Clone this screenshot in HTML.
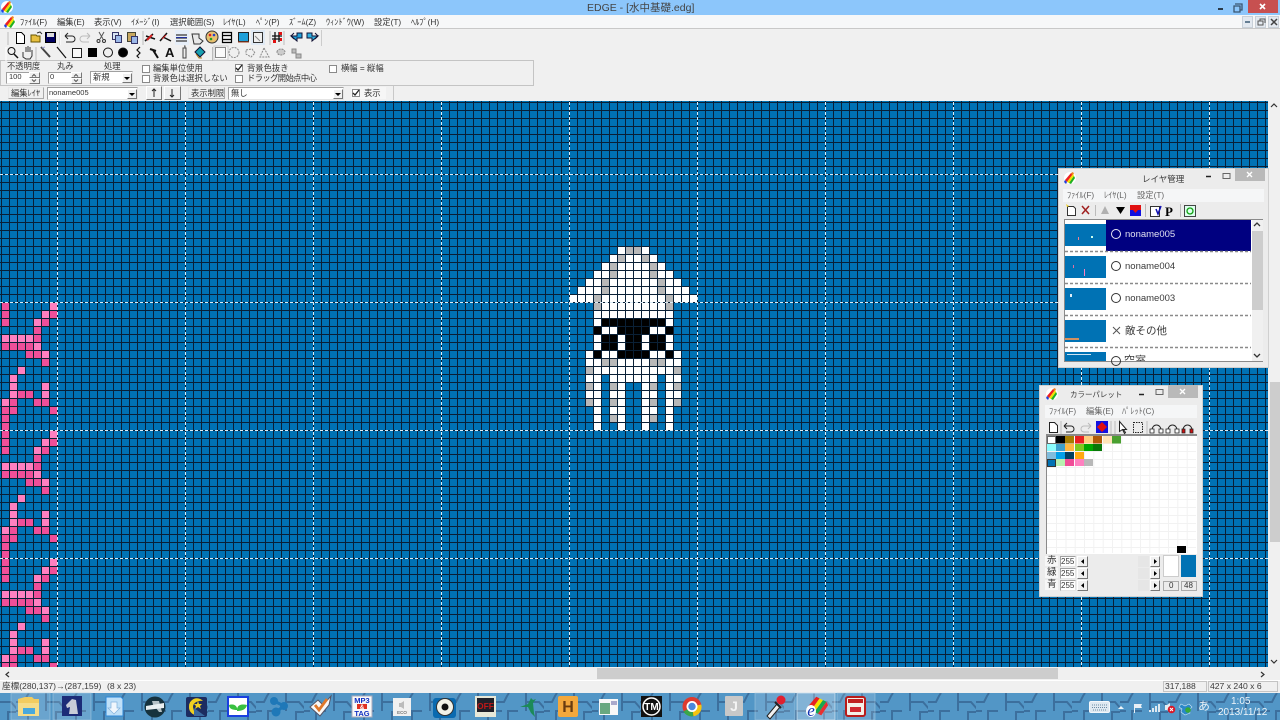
<!DOCTYPE html>
<html lang="ja"><head><meta charset="utf-8"><title>EDGE</title>
<style>
html,body{margin:0;padding:0;width:1280px;height:720px;overflow:hidden;background:#f0f0f0}
body{position:relative}
svg{position:absolute;left:0;top:0}
.b{position:absolute;box-sizing:border-box}
.t{position:absolute;white-space:nowrap;font:10px/12px "Liberation Sans","Noto Sans CJK JP",sans-serif;color:#3a3a3a;filter:blur(.2px)}
.m{font-size:8.3px;color:#333}
.in{position:absolute;box-sizing:border-box;background:#fff;border:1px solid #a0a0a0;border-bottom-color:#e4e4e4;border-right-color:#e4e4e4}
.btn{position:absolute;box-sizing:border-box;background:#f0f0f0;border:1px solid #fff;border-right-color:#777;border-bottom-color:#777}
.cb{position:absolute;box-sizing:border-box;width:8px;height:8px;background:#fff;border:1px solid #8a8a8a}
</style></head><body>

<div class="b" style="left:0;top:0;width:1280px;height:15px;background:#8cc6fb"></div>
<div class="b" style="left:0;top:15px;width:1280px;height:14px;background:#f6f7f8;border-bottom:1px solid #c8c8c8"></div>
<div class="b" style="left:1248px;top:0;width:30px;height:13px;background:#c75050"></div>
<div class="b" style="left:1242px;top:16px;width:11px;height:12px;background:#e3e9f0;border:1px solid #c8d0d8"></div>
<div class="b" style="left:1255px;top:16px;width:11px;height:12px;background:#e3e9f0;border:1px solid #c8d0d8"></div>
<div class="b" style="left:1268px;top:16px;width:11px;height:12px;background:#e3e9f0;border:1px solid #c8d0d8"></div>
<div class="b" style="left:0;top:60px;width:534px;height:26px;border:1px solid #c4c4c4"></div>

<svg width="1280" height="720" viewBox="0 0 1280 720" shape-rendering="crispEdges" style="clip-path:inset(101px 12px 53px 0)">
<defs>
<pattern id="g" width="8" height="8" patternUnits="userSpaceOnUse" x="1" y="102"><path d="M0 0h8v1H1v7H0z" fill="#0a2036"/></pattern>
<g id="pk">
<path fill="#ef4f99" d="M0 0h1v1H0zM0 1h1v1H0zM6 1h1v1H6zM0 2h1v1H0zM5 2h1v1H5zM4 3h1v1H4zM4 4h1v1H4zM0 5h4v1H0zM3 6h2v1H3zM5 7h1v1H5zM2 11h2v1H2zM1 12h1v1H1zM4 12h2v1H4zM0 13h2v1H0zM6 13h1v1H6zM0 14h1v1H0zM0 15h1v1H0z"/>
<path fill="#ff80c0" d="M6 0h1v1H6zM5 1h1v1H5zM4 2h1v1H4zM0 4h4v1H0zM4 5h1v1H4zM5 6h1v1H5zM2 8h1v1H2zM1 9h1v1H1zM1 10h1v1H1zM5 10h1v1H5zM1 11h1v1H1zM5 11h1v1H5zM0 12h1v1H0z"/>
</g>
</defs>
<rect x="0" y="100" width="1280" height="2" fill="#3a3a3a"/>
<rect x="0" y="101" width="1268" height="566" fill="#0072b4"/>
<use href="#pk" transform="translate(1 302) scale(8)"/>
<use href="#pk" transform="translate(1 430) scale(8)"/>
<use href="#pk" transform="translate(1 558) scale(8)"/>
<g transform="translate(561 246) scale(8)">
<path fill="#fff" d="M7 0h4v1H7zM6 1h6v1H6zM5 2h8v1H5zM4 3h10v1H4zM3 4h12v1H3zM2 5h14v1H2zM1 6h16v1H1zM4 7h10v6H4zM3 13h12v3H3zM3 16h2v4H3zM6 16h6v1H6zM13 16h2v4h-2zM6 17h2v4H6zM10 17h2v4h-2zM4 20h1v3H4zM13 20h1v3h-1zM7 21h1v2H7zM10 21h1v2h-1z"/>
<path fill="#b8b8b8" d="M8 0h2v1H8zM7 1h1v1H7zM10 1h1v1h-1zM6 2h1v2H6zM11 2h1v2h-1zM5 4h1v2H5zM12 4h1v2h-1zM4 6h1v2H4zM13 6h1v2h-1zM5 14h2v1H5zM11 14h2v1h-2zM3 15h1v1H3zM14 15h1v1h-1zM3 17h1v1H3zM14 17h1v1h-1zM6 17h1v1H6zM11 17h1v1h-1zM3 19h1v1H3zM14 19h1v1h-1zM6 19h1v1H6zM11 19h1v1h-1zM6 21h1v1H6zM11 21h1v1h-1z"/>
<path fill="#000" d="M5 9h8v1H5zM4 10h1v1H4zM7 10h4v1H7zM13 10h1v1h-1zM5 11h2v2H5zM8 11h2v2H8zM11 11h2v2h-2zM4 13h1v1H4zM7 13h4v1H7zM13 13h1v1h-1z"/>
</g>
<rect x="0" y="101" width="1268" height="566" fill="url(#g)"/>
<path stroke="#dcecf6" stroke-width="1" stroke-dasharray="3 2" fill="none" d="M0 174.500H1268M0 302.500H1268M0 430.500H1268M0 558.500H1268M57.500 102V667M185.500 102V667M313.500 102V667M441.500 102V667M569.500 102V667M697.500 102V667M825.500 102V667M953.500 102V667M1081.500 102V667M1209.500 102V667"/>
</svg>

<!-- scrollbars -->
<div class="b" style="left:1268px;top:102px;width:12px;height:565px;background:#f0f0f0"></div>
<div class="b" style="left:1270px;top:382px;width:10px;height:160px;background:#cdcdcd"></div>
<div class="b" style="left:0;top:667px;width:1280px;height:13px;background:#f0f0f0"></div>
<div class="b" style="left:597px;top:668px;width:461px;height:11px;background:#cdcdcd"></div>
<div class="b" style="left:0;top:680px;width:1280px;height:13px;background:#f0f0f0;border-top:1px solid #fff"></div>
<div class="b" style="left:1163px;top:681px;width:44px;height:11px;border:1px solid #c4c4c4"></div>
<div class="b" style="left:1208px;top:681px;width:70px;height:11px;border:1px solid #c4c4c4"></div>

<!-- inputs toolbar -->
<div class="in" style="left:6px;top:72px;width:34px;height:12px"></div>
<div class="btn" style="left:29px;top:72px;width:11px;height:6px"></div><div class="btn" style="left:29px;top:78px;width:11px;height:6px"></div>
<div class="in" style="left:48px;top:72px;width:34px;height:12px"></div>
<div class="btn" style="left:71px;top:72px;width:11px;height:6px"></div><div class="btn" style="left:71px;top:78px;width:11px;height:6px"></div>
<div class="in" style="left:90px;top:71px;width:43px;height:13px"></div>
<div class="btn" style="left:122px;top:73px;width:10px;height:10px"></div>
<div class="cb" style="left:142px;top:65px"></div><div class="cb" style="left:142px;top:75px"></div>
<div class="cb" style="left:235px;top:64px"></div><div class="cb" style="left:235px;top:75px"></div>
<div class="cb" style="left:329px;top:65px"></div>
<div class="btn" style="left:8px;top:87px;width:36px;height:12px;border-color:#e8e8e8 #aaa #aaa #e8e8e8"></div>
<div class="in" style="left:47px;top:87px;width:91px;height:13px"></div>
<div class="btn" style="left:127px;top:89px;width:10px;height:10px"></div>
<div class="btn" style="left:146px;top:86px;width:16px;height:14px"></div>
<div class="btn" style="left:164px;top:86px;width:17px;height:14px"></div>
<div class="btn" style="left:188px;top:87px;width:37px;height:12px;border-color:#e8e8e8 #aaa #aaa #e8e8e8"></div>
<div class="in" style="left:228px;top:87px;width:116px;height:13px"></div>
<div class="btn" style="left:333px;top:89px;width:10px;height:10px"></div>
<div class="b" style="left:351px;top:87px;width:35px;height:12px;background:#f6f6f6"></div>
<div class="cb" style="left:352px;top:89px"></div>
<div class="b" style="left:393px;top:86px;width:1px;height:14px;background:#c8c8c8"></div>
<div class="b" style="left:0;top:30px;width:322px;height:16px;border-right:1px solid #ccc"></div>

<!-- layer window -->
<div class="b" style="left:1058px;top:168px;width:211px;height:200px;background:#ececec;border:1px solid #d0d0d0"></div>
<div class="b" style="left:1235px;top:168px;width:30px;height:13px;background:#b9b9b9"></div>
<div class="b" style="left:1063px;top:189px;width:201px;height:13px;background:#f5f6f7"></div>
<div class="b" style="left:1064px;top:219px;width:199px;height:143px;background:#fff;border:1px solid #8a8a8a;border-width:1px 0 1px 1px"></div>
<div class="b" style="left:1252px;top:220px;width:11px;height:141px;background:#f0f0f0"></div>
<div class="b" style="left:1252px;top:231px;width:11px;height:79px;background:#cdcdcd"></div>
<div class="b" style="left:1106px;top:220px;width:145px;height:31px;background:#000080"></div>
<div class="b" style="left:1065px;top:224px;width:41px;height:22px;background:#0072b4"></div>
<div class="b" style="left:1065px;top:256px;width:41px;height:22px;background:#0072b4"></div>
<div class="b" style="left:1065px;top:288px;width:41px;height:22px;background:#0072b4"></div>
<div class="b" style="left:1065px;top:320px;width:41px;height:22px;background:#0072b4"></div>
<div class="b" style="left:1065px;top:352px;width:41px;height:9px;background:#0072b4"></div>

<!-- palette window -->
<div class="b" style="left:1039px;top:385px;width:164px;height:212px;background:#ececec;border:1px solid #d0d0d0"></div>
<div class="b" style="left:1168px;top:385px;width:30px;height:13px;background:#b9b9b9"></div>
<div class="b" style="left:1045px;top:405px;width:152px;height:13px;background:#f5f6f7"></div>
<div class="b" style="left:1046px;top:434px;width:151px;height:120px;background:#fff;border:1px solid #8a8a8a;border-width:2px 0 0 1px"></div>
<div class="b" style="left:1163px;top:555px;width:16px;height:22px;background:#fff;border:1px solid #ccc"></div>
<div class="b" style="left:1181px;top:555px;width:15px;height:22px;background:#0072b4"></div>
<div class="b" style="left:1163px;top:581px;width:16px;height:10px;border:1px solid #aaa"></div>
<div class="b" style="left:1181px;top:581px;width:16px;height:10px;border:1px solid #aaa"></div>
<div class="b" style="left:1045px;top:556px;width:13px;height:10px;background:#f7f7f7"></div>
<div class="b" style="left:1045px;top:568px;width:13px;height:10px;background:#f7f7f7"></div>
<div class="b" style="left:1045px;top:580px;width:13px;height:10px;background:#f7f7f7"></div>
<div class="in" style="left:1060px;top:556px;width:16px;height:11px"></div>
<div class="in" style="left:1060px;top:568px;width:16px;height:11px"></div>
<div class="in" style="left:1060px;top:580px;width:16px;height:11px"></div>
<div class="btn" style="left:1077px;top:556px;width:11px;height:11px"></div>
<div class="btn" style="left:1077px;top:568px;width:11px;height:11px"></div>
<div class="btn" style="left:1077px;top:580px;width:11px;height:11px"></div>
<div class="b" style="left:1138px;top:556px;width:11px;height:11px;background:#e6e6e6"></div>
<div class="b" style="left:1138px;top:568px;width:11px;height:11px;background:#e6e6e6"></div>
<div class="b" style="left:1138px;top:580px;width:11px;height:11px;background:#e6e6e6"></div>
<div class="btn" style="left:1150px;top:556px;width:10px;height:11px"></div>
<div class="btn" style="left:1150px;top:568px;width:10px;height:11px"></div>
<div class="btn" style="left:1150px;top:580px;width:10px;height:11px"></div>

<!-- taskbar bg -->
<div class="b" style="left:0;top:693px;width:1280px;height:27px;background:#5296c6"></div>

<!-- overlay icons -->
<svg width="1280" height="720" viewBox="0 0 1280 720">
<defs>
<pattern id="mz" width="48" height="27" patternUnits="userSpaceOnUse" x="880" y="693">
<path d="M0 9h8l3-6 2-3M30 0v9h13l7 8M30 9v9M12 27V18h10" fill="none" stroke="#3c6f9d" stroke-width="2"/>
<path d="M0 18h6M40 27V19h8" fill="none" stroke="#3c6f9d" stroke-width="2"/>
</pattern>
<g id="rb">
<circle cx="6" cy="6" r="6" fill="#fff"/>
<path d="M1 8L7 1l2 1L3 10z" fill="#ef2020"/><path d="M3 10L9 2l1 2L5 11z" fill="#f2e000"/><path d="M5 11L10 4l1 2L7 12z" fill="#20b020"/><path d="M1 8l2 2-1 2-2-2z" fill="#2040e0"/><path d="M7 1l2-1 1 2-2 1z" fill="#f08020"/>
</g>
</defs>
<rect x="0" y="693" width="1280" height="27" fill="url(#mz)"/>
<rect x="11" y="693" width="39" height="27" fill="#fff" fill-opacity=".14" stroke="#a8cbe2" stroke-opacity=".5"/>
<rect x="53" y="693" width="38" height="27" fill="#fff" fill-opacity=".14" stroke="#a8cbe2" stroke-opacity=".5"/>
<rect x="755" y="693" width="40" height="27" fill="#fff" fill-opacity=".14" stroke="#a8cbe2" stroke-opacity=".5"/>
<rect x="797" y="693" width="38" height="27" fill="#fff" fill-opacity=".28" stroke="#cde0ee" stroke-opacity=".8"/>
<rect x="837" y="693" width="38" height="27" fill="#fff" fill-opacity=".14" stroke="#a8cbe2" stroke-opacity=".5"/>

<!-- window title buttons -->
<path d="M1218 8h5v2h-5z" fill="#2a3a4a"/>
<path d="M1235 4h7v6h-2M1234 6h6v6h-6z" fill="none" stroke="#3a556f" stroke-width="1.300"/>
<path d="M1260 4l5 5M1265 4l-5 5" stroke="#fff" stroke-width="1.600"/>
<path d="M1245 22h5" stroke="#3b5a74" stroke-width="1.500"/>
<path d="M1258 21h5v4h-5zM1260 21v-2h5v4" fill="none" stroke="#555" stroke-width="1"/>
<path d="M1271 19l6 6M1277 19l-6 6" stroke="#444" stroke-width="1.500"/>
<use href="#rb" x="1" y="1"/><use href="#rb" x="4" y="16"/>

<!-- toolbar row 1 -->
<g fill="none" stroke="#000" stroke-width="1">
<path d="M16.500 32.500h5l3 3v8h-8z" fill="#fff"/>
<path d="M31 35h5l1 1h3v6H31z" fill="#e8c040" stroke="#665500"/><path d="M37 33l3-1 2 2" stroke="#333"/>
<rect x="45.500" y="32.500" width="10" height="10" fill="#000060"/><rect x="47" y="33" width="7" height="4" fill="#ddd" stroke="none"/>
<path d="M65 36h7a3 3 0 0 1 0 6h-6M65 36l3-3M65 36l3 3" stroke="#222"/>
<path d="M90 36h-7a3 3 0 0 0 0 6h6M90 36l-3-3M90 36l-3 3" stroke="#bbb"/>
<path d="M99 32l4 7M104 32l-4 7" stroke="#555"/><circle cx="98.500" cy="41" r="1.500" stroke="#333"/><circle cx="104" cy="41" r="1.500" stroke="#333"/>
<rect x="112.500" y="32.500" width="6" height="7" fill="#d8e4f4" stroke="#336"/><rect x="115.500" y="35.500" width="6" height="7" fill="#9bb8e8" stroke="#336"/>
<rect x="127.500" y="32.500" width="8" height="9" fill="#c8a860" stroke="#443"/><rect x="131.500" y="36.500" width="6" height="7" fill="#9bb8e8" stroke="#336"/>
<path d="M145 41l8-7M146 36l9 3" stroke="#111" stroke-width="1.500"/><path d="M147 40l5-5" stroke="#d02020" stroke-width="2"/>
<path d="M160 41l7-8M163 37l8 4" stroke="#111" stroke-width="1.500"/><path d="M162 39l4-4" stroke="#d02020"/>
<rect x="175" y="30" width="14" height="15" fill="#e6eef8" stroke="none"/><path d="M176 35h11M176 38h11M176 41h11" stroke="#555" stroke-width="1.500"/><path d="M176 37.500h11" stroke="#2030a0"/>
<path d="M192 34h7v4l4 3-3 3h-6z" fill="#e8e8e8" stroke="#333"/>
<circle cx="212" cy="37" r="6" fill="#e8c070" stroke="#333"/><circle cx="210" cy="35" r="1.300" fill="#e02020" stroke="none"/><circle cx="214" cy="35" r="1.300" fill="#2040d0" stroke="none"/><circle cx="211" cy="39" r="1.300" fill="#20a020" stroke="none"/>
<path d="M222.500 32.500h9v10h-9zM222.500 35.500h9M222.500 39.500h9" stroke="#000" stroke-width="1.200"/>
<rect x="238.500" y="32.500" width="10" height="9" fill="#20a0d8" stroke="#222"/><path d="M238 42h11" stroke="#a04020"/>
<rect x="251" y="30" width="14" height="15" fill="#dfe9f4" stroke="none"/><rect x="253.500" y="32.500" width="9" height="10" fill="#f0f0f0" stroke="#333"/><path d="M255 36l5 5" stroke="#888"/>
<path d="M272 36h10M272 39h10M275 32v10M279 32v10" stroke="#111" stroke-width="1.300"/><path d="M279 32h3v3h-3zM273 40h3v3h-3zM280 38h2v3h-2z" fill="#e01010" stroke="none"/>
<path d="M291 36h6v-3h5v5h-5v3z" fill="#20a0d8" stroke="#113"/><path d="M291 36l3-3M291 36l3 3" stroke="#113"/>
<path d="M318 36h-6v-3h-5v5h5v3z" fill="#30b0e0" stroke="#113"/><path d="M318 36l-3-3M318 36l-3 3" stroke="#113"/>
</g>
<path d="M59.500 31v14M143 31v14M270 31v14M284 31v14M8 32v13M36 47v14M212.500 47v14" stroke="#bbb"/>
<path d="M60 31v14M6 47v14" stroke="#fff"/>

<!-- toolbar row 2 -->
<g fill="none" stroke="#111" stroke-width="1">
<circle cx="11.500" cy="51" r="3.500"/><path d="M14 54l4 4" stroke-width="1.500"/>
<path d="M23 52v5l3 2h4l2-3v-6M26 52v-5M28 52v-6M30 52v-5" stroke="#333"/>
<path d="M41 47l9 10" stroke="#444" stroke-width="2"/><path d="M42 48l3-1" stroke="#a0a0d0"/>
<path d="M57 47l9 11" stroke="#111" stroke-width="1.200"/>
<rect x="72.500" y="48.500" width="9" height="9" fill="#fafafa" stroke="#222"/>
<rect x="88" y="48" width="9" height="9" fill="#000" stroke="none"/>
<circle cx="108" cy="52.500" r="4.500"/><circle cx="123" cy="52.500" r="4.500" fill="#000"/>
<path d="M140 47l-3 3 3 3-3 3 2 2" stroke-width="1.200"/>
<path d="M150 49l6 2M153 50l5 8" stroke="#111" stroke-width="2"/>
<path d="M183 48h3v10h-3z" fill="#eee" stroke="#444"/><path d="M184 46h1v2" stroke="#444"/>
<path d="M195 52l5-5 5 5-5 5z" fill="#18a0b0" stroke="#113"/><path d="M196 54l3 4h3" stroke="#b08020"/>
<rect x="214" y="46" width="14" height="14" fill="#fafafa" stroke="#ccc"/><rect x="215.500" y="47.500" width="10" height="10" stroke="#888"/>
<circle cx="234" cy="52.500" r="5" stroke="#888" stroke-dasharray="2 1"/>
<path d="M246 50l6-1 3 4-4 4-5-3z" stroke="#888" stroke-dasharray="2 1"/>
<path d="M264 48l5 9-9 0z" stroke="#888" stroke-dasharray="2 1"/>
<path d="M277 52a4 3 0 0 1 8 0a4 3 0 0 1-8 0z" fill="#ccc" stroke="#888" stroke-dasharray="2 1"/>
<path d="M292 49h4v4h-4zM296 54h5v4h-5z" fill="#bbb" stroke="#888"/>
</g>
<text x="165" y="57" font-family="Liberation Sans" font-size="13" font-weight="bold" fill="#111">A</text>

<!-- checks & arrows -->
<path d="M236 68l2 2 4-5M353 93l2 2 4-5" fill="none" stroke="#222" stroke-width="1.300"/>
<path d="M32 76.500l2-2 2 2M32 79.500l2 2 2-2M74 76.500l2-2 2 2M74 79.500l2 2 2-2" fill="none" stroke="#555"/>
<path d="M124 77h6l-3 3zM129 93h6l-3 3zM335 93h6l-3 3z" fill="#000"/>
<path d="M154 89v8M152 91l2-2 2 2M172 89v8M170 95l2 2 2-2" fill="none" stroke="#222"/>

<!-- layer window -->
<use href="#rb" x="1064" y="172"/><use href="#rb" x="1046" y="388"/>
<path d="M1206 176.500h5M1139 394.500h5" stroke="#222" stroke-width="1.500"/>
<path d="M1223 173.500h7v5h-7zM1156 389.500h7v5h-7z" fill="none" stroke="#666"/>
<path d="M1247 172l5 5M1252 172l-5 5M1180 389l5 5M1185 389l-5 5" stroke="#fff" stroke-width="1.400"/>
<path d="M1067.500 206.500h6l2 2v7h-8z" fill="#fff" stroke="#333"/><path d="M1066 204l3 2-2 1z" fill="#f0d020"/>
<path d="M1082 206l7 8M1089 206l-7 8" stroke="#a02020" stroke-width="1.500"/>
<path d="M1105 206l4 8h-8z" fill="#b0b0b0"/><path d="M1116 207h9l-4.500 7z" fill="#000"/>
<rect x="1130" y="205" width="11" height="11" fill="#1010e0"/><rect x="1130" y="205" width="11" height="5" fill="#e01010"/><path d="M1133 210h5l-2.500 3z" fill="#e01010"/>
<path d="M1095.500 205v11M1145.500 204v13M1180.500 204v13" stroke="#bbb"/>
<rect x="1150.500" y="206.500" width="9" height="10" fill="#fff" stroke="#333"/><path d="M1156 209l2 5 3-8" fill="none" stroke="#1010b0" stroke-width="1.500"/>
<rect x="1184.500" y="205.500" width="11" height="11" fill="#dfe" stroke="#444"/><circle cx="1190" cy="211" r="3" fill="none" stroke="#10a010" stroke-width="1.300"/>
<text x="1165" y="216" font-family="Liberation Serif" font-size="13" font-weight="bold" fill="#000">P</text>
<circle cx="1116" cy="234" r="4.500" fill="none" stroke="#e8e8f4"/>
<circle cx="1116" cy="266" r="4.500" fill="none" stroke="#333"/>
<circle cx="1116" cy="298" r="4.500" fill="none" stroke="#333"/>
<circle cx="1116" cy="361" r="4.500" fill="none" stroke="#333"/>
<path d="M1113 327l7 7M1120 327l-7 7" stroke="#555"/>
<path d="M1065 251.500H1251M1065 283.500H1251M1065 315.500H1251M1065 347.500H1251" stroke="#8a8a8a" stroke-width="1.500" stroke-dasharray="3 2"/>
<path d="M1254 226l3-3 3 3M1254 354l3 3 3-3" fill="none" stroke="#333" stroke-width="1.300"/>
<rect x="1078" y="237" width="1" height="3" fill="#f08090"/><rect x="1091" y="236" width="2" height="2" fill="#cfe"/>
<rect x="1073" y="265" width="1" height="3" fill="#e070a0"/><rect x="1084" y="269" width="1" height="7" fill="#ff80c0"/>
<rect x="1070" y="294" width="2" height="3" fill="#dfeef8"/>
<rect x="1065" y="338" width="14" height="2" fill="#d09060"/>
<rect x="1067" y="354" width="24" height="1" fill="#cfe4f2"/>

<!-- palette toolbar -->
<path d="M1049.500 422.500h5l3 3v7h-8z" fill="#fff" stroke="#222"/>
<path d="M1064 426h7a3 3 0 0 1 0 6h-5M1064 426l3-3M1064 426l3 3" fill="none" stroke="#222"/>
<path d="M1091 426h-7a3 3 0 0 0 0 6h5M1091 426l-3-3M1091 426l-3 3" fill="none" stroke="#bbb"/>
<rect x="1096" y="421" width="12" height="12" fill="#1010e0"/><path d="M1102 422l5 5-5 5-5-5z" fill="#e01010"/>
<path d="M1061 421v13M1111 421v13M1115 421v13M1147 421v13" stroke="#bbb"/>
<path d="M1119.500 421.500v10l3-2 2 4 1-1-2-3h3z" fill="#fff" stroke="#222"/>
<rect x="1133.500" y="422.500" width="9" height="10" fill="none" stroke="#222" stroke-dasharray="1.500 1"/>
<g fill="none" stroke="#222"><path d="M1152 430a4.500 5 0 0 1 9 0M1168 430a4.500 5 0 0 1 9 0M1183 430a4.500 5 0 0 1 9 0"/></g>
<path d="M1150 429h4v4h-4zM1159 429h4v4h-4zM1166 429h4v4h-4zM1175 429h4v4h-4z" fill="#fff" stroke="#222" stroke-width=".8"/>
<path d="M1182 429h3v4h-3zM1190 429h3v4h-3z" fill="#d01010" stroke="#222" stroke-width=".8"/>
<!-- palette grid -->
<path d="M1056.500 436v117M1066 436v117M1075.200 436v117M1084.500 436v117M1093.800 436v117M1103.200 436v117M1112.500 436v117M1121.800 436v117M1131.200 436v117M1140.500 436v117M1149.800 436v117M1159.200 436v117M1168.500 436v117M1177.800 436v117M1187.200 436v117M1047 443.500h149M1047 451.500h149M1047 459.500h149M1047 467.500h149M1047 475.500h149M1047 483.500h149M1047 491.500h149M1047 499.500h149M1047 507.500h149M1047 515.500h149M1047 523.500h149M1047 531.500h149M1047 539.500h149M1047 547.500h149" stroke="#f2f2f2"/>
<rect x="1047.500" y="436.500" width="8" height="7" fill="#fff" stroke="#666"/><rect x="1056" y="436" width="9" height="7.500" fill="#000"/><rect x="1065" y="436" width="9" height="7.500" fill="#a67c00"/><rect x="1075" y="436" width="9" height="7.500" fill="#e82020"/><rect x="1084" y="436" width="9" height="7.500" fill="#ffce80"/><rect x="1093" y="436" width="9" height="7.500" fill="#b05a08"/><rect x="1103" y="436" width="9" height="7.500" fill="#ffe4b8"/><rect x="1112" y="436" width="9" height="7.500" fill="#4aa030"/>
<rect x="1047" y="444" width="9" height="7" fill="#8cfcfc"/><rect x="1056" y="444" width="9" height="7" fill="#3ea0cc"/><rect x="1065" y="444" width="9" height="7" fill="#ffb840"/><rect x="1075" y="444" width="9" height="7" fill="#80c820"/><rect x="1084" y="444" width="9" height="7" fill="#00a800"/><rect x="1093" y="444" width="9" height="7" fill="#087808"/>
<rect x="1047" y="452" width="9" height="7" fill="#80bcdc"/><rect x="1056" y="452" width="9" height="7" fill="#00a0e8"/><rect x="1065" y="452" width="9" height="7" fill="#004060"/><rect x="1075" y="452" width="9" height="7" fill="#ffa810"/>
<rect x="1047.500" y="459.500" width="8" height="7" fill="#0072b4" stroke="#333"/><rect x="1056" y="459" width="9" height="7" fill="#b8f0b0"/><rect x="1065" y="459" width="9" height="7" fill="#f04d98"/><rect x="1075" y="459" width="9" height="7" fill="#ff80c0"/><rect x="1084" y="459" width="9" height="7" fill="#b8b8b8"/>
<rect x="1177" y="546" width="9" height="7" fill="#000"/>
<path d="M1084 559l-3 2.500 3 2.500zM1084 571l-3 2.500 3 2.500zM1084 583l-3 2.500 3 2.500zM1154 559l3 2.500-3 2.500zM1154 571l3 2.500-3 2.500zM1154 583l3 2.500-3 2.500z" fill="#000"/>

<!-- scroll arrows -->
<path d="M1271 107l3-3 3 3M1271 660l3 3 3-3M9 672l-3 2.500 3 2.500M1261 672l3 2.500-3 2.500" fill="none" stroke="#333" stroke-width="1.200"/>

<!-- taskbar icons -->
<path d="M18 699l7-2h7l2 2h5v4H18z" fill="#f2cc60"/><rect x="18" y="703" width="21" height="13" fill="#f5dc88"/><rect x="23" y="708" width="12" height="6" fill="#48a8dc"/>
<rect x="62" y="696" width="20" height="20" fill="#1c2c78"/><path d="M69 714l1-7-3 1-1-3 6-6 4 1 2 14z" fill="#c8ccd8"/>
<path d="M106 697h15l2 2v17h-17z" fill="#bfe0f8" stroke="#2e88d8"/><path d="M111 702h6v6h3l-6 6-6-6h3z" fill="#f0f6fc" stroke="#80b0dc" stroke-width=".7"/>
<circle cx="155" cy="707" r="10.500" fill="#16323e"/><path d="M146 706l18-3v5l-18 2z" fill="#e8eef0"/><path d="M152 701h7l3 11h-3l-3-4h-2z" fill="#e8f0f4" opacity=".75"/>
<rect x="186" y="697" width="21" height="20" rx="2" fill="#1c2c60"/><path d="M189 707a8 8 0 0 1 14-6 8 6 0 0 0-10 6l2 8a8 8 0 0 1-6-8z" fill="#f0d020"/><path d="M198 701l1 3 3 0-2 2 1 3-3-2-3 2 1-3-2-2h3z" fill="#f0d020"/><path d="M194 708l11 8h-11z" fill="#3a6aa0"/>
<rect x="228" y="697" width="20" height="19" fill="#fff" stroke="#1a40e0" stroke-width="2"/><path d="M237 716v-8c-1-4-6-4-8-3 0 4 4 5 8 5 0-6 6-6 10-5-1 5-6 6-10 6z" fill="#38c040"/>
<g fill="#1f78b8"><circle cx="274" cy="701" r="4"/><circle cx="284" cy="706" r="4"/><circle cx="276" cy="712" r="4.500"/></g><path d="M274 701l10 5-8 6" fill="none" stroke="#1f78b8" stroke-width="3"/>
<path d="M310 707l8-7 5 5 8-9-2 9-9 11z" fill="#f8f8f8" stroke="#556"/><path d="M315 705l4 5 8-11" fill="none" stroke="#e0782a" stroke-width="2.800"/>
<rect x="352" y="696" width="20" height="21" fill="#f8f8f8" stroke="#aab"/><path d="M357 704h10v5h-10z" fill="#e03020"/>
<text x="362" y="703" text-anchor="middle" font-family="Liberation Sans" font-size="7.500" font-weight="bold" fill="#1030c0">MP3</text>
<text x="362" y="709" text-anchor="middle" font-family="Liberation Sans" font-size="6" font-weight="bold" fill="#fff">&amp;</text>
<text x="362" y="716" text-anchor="middle" font-family="Liberation Sans" font-size="7.500" font-weight="bold" fill="#1030c0">TAG</text>
<rect x="393" y="698" width="18" height="18" fill="#f0f0f0"/><path d="M399 703h2l3-2v8l-3-2h-2z" fill="#bbb"/><text x="402" y="714" text-anchor="middle" font-family="Liberation Sans" font-size="4.500" fill="#444">ECO</text>
<rect x="433" y="698" width="23" height="20" rx="3" fill="#0a6ab0"/><circle cx="445" cy="707" r="8.500" fill="#f2f2e8" stroke="#333"/><circle cx="445" cy="707" r="3.500" fill="#111"/>
<rect x="475" y="696" width="21" height="21" fill="#e8e8d8"/><rect x="477" y="698" width="17" height="14" fill="#202028"/>
<text x="485.500" y="709" text-anchor="middle" font-family="Liberation Sans" font-size="8.500" font-weight="bold" fill="#c01818">OFF</text>
<path d="M520 707l8-3 3-6 2 2 3-1-3 4 1 10 1 4-4-4-3-6z" fill="#1c8a58"/>
<rect x="558" y="696" width="20" height="21" rx="2" fill="#f4a83c"/>
<text x="568" y="712" text-anchor="middle" font-family="Liberation Sans" font-size="16" font-weight="bold" fill="#6a3c10">H</text>
<rect x="599" y="699" width="19" height="16" fill="#f8f8f8"/><rect x="600" y="703" width="10" height="11" fill="#68a880"/><rect x="611" y="701" width="6" height="4" fill="#aac"/>
<rect x="641" y="696" width="21" height="21" fill="#111"/><circle cx="651.500" cy="706.500" r="8.500" fill="none" stroke="#fff" stroke-width="1.500"/>
<text x="651.500" y="710" text-anchor="middle" font-family="Liberation Sans" font-size="10" font-weight="bold" fill="#fff">TM</text>
<circle cx="692" cy="706.500" r="9.500" fill="#dd3b2f"/><path d="M692 706.500l-8.500 5a9.500 9.500 0 0 0 10 4.800z" fill="#3aa648"/><path d="M692 706.500l1.500 9.800a9.500 9.500 0 0 0 7.800-11.800z" fill="#f6c40f"/><circle cx="692" cy="706.500" r="4.600" fill="#4a88dc" stroke="#fff" stroke-width="1.800"/>
<rect x="725" y="696" width="18" height="20" rx="1" fill="#c8c8c8"/>
<text x="734" y="711" text-anchor="middle" font-family="Liberation Sans" font-size="14" font-weight="bold" fill="#f4f4f4">J</text>
<path d="M767 716l10-12 3 3-10 12z" fill="#f0f0f0" stroke="#222"/><circle cx="781" cy="700" r="4.500" fill="#e02030"/><path d="M775 702l6 6" stroke="#222" stroke-width="2"/>
<g transform="translate(806 695) scale(1.700)"><path d="M1 7l5-6 2 1-5 7z" fill="#e82020"/><path d="M3 9l5-7 2 1-5 7z" fill="#f4e000"/><path d="M5 10l5-7 2 1-5 7z" fill="#18a850"/><path d="M7 11l5-7 1 2-4 6z" fill="#e83030"/></g>
<ellipse cx="811" cy="711" rx="5" ry="6" fill="#fff"/>
<text x="811" y="716" text-anchor="middle" font-family="Liberation Serif" font-size="17" font-style="italic" fill="#1030b0">e</text>
<rect x="846" y="697" width="19" height="19" rx="2" fill="#f4f0e8" stroke="#b81c1c" stroke-width="2"/><rect x="848" y="699" width="15" height="4" fill="#c02020"/><rect x="850" y="707" width="11" height="5" fill="#d02830"/>
<!-- tray -->
<rect x="1089.500" y="701.500" width="20" height="11" rx="1.500" fill="#dfe9f1" stroke="#f4f8fb"/><path d="M1092 705h15M1092 707.500h15M1093 710h13" stroke="#6a8aa4" stroke-dasharray="1 1"/>
<path d="M1118 709l3-3 3 3z" fill="#eef4f8"/>
<path d="M1134 704h8l-1 2 1 2h-7v5h-1z" fill="#e8f0f6"/>
<path d="M1149 710h2v2h-2zM1152 708h2v4h-2zM1155 706h2v6h-2zM1158 704h2v8h-2z" fill="#dde8f0"/>
<path d="M1165 705h2l3-2v9l-3-2h-2z" fill="#e4ecf2"/><circle cx="1171.500" cy="709.500" r="3.800" fill="#d81828"/><path d="M1170 708l3 3M1173 708l-3 3" stroke="#fff"/>
<path d="M1181 704l4 2 4-2 3 3-3 3 1 3-5 2-4-3 1-3-3-2z" fill="#2a88c8" stroke="#cfe6f4" stroke-width=".6"/><circle cx="1188" cy="710" r="2.800" fill="#38a838"/>
</svg>

<!-- text -->
<div class="t" style="left:587px;top:1px;font-size:10.500px;line-height:15px;color:#444">EDGE - [水中基礎.edg]</div>
<div class="t m" style="left:20px;top:16px">ﾌｧｲﾙ(F)</div>
<div class="t m" style="left:57px;top:16px">編集(E)</div>
<div class="t m" style="left:94px;top:16px">表示(V)</div>
<div class="t m" style="left:131px;top:16px">ｲﾒｰｼﾞ(I)</div>
<div class="t m" style="left:170px;top:16px">選択範囲(S)</div>
<div class="t m" style="left:223px;top:16px">ﾚｲﾔ(L)</div>
<div class="t m" style="left:256px;top:16px">ﾍﾟﾝ(P)</div>
<div class="t m" style="left:289px;top:16px">ｽﾞｰﾑ(Z)</div>
<div class="t m" style="left:326px;top:16px">ｳｨﾝﾄﾞｳ(W)</div>
<div class="t m" style="left:374px;top:16px">設定(T)</div>
<div class="t m" style="left:411px;top:16px">ﾍﾙﾌﾟ(H)</div>

<div class="t m" style="left:7px;top:60px">不透明度</div>
<div class="t m" style="left:57px;top:60px">丸み</div>
<div class="t m" style="left:104px;top:60px">処理</div>
<div class="t m" style="left:9px;top:71px;font-size:7.500px">100</div>
<div class="t m" style="left:50px;top:71px;font-size:7.500px">0</div>
<div class="t m" style="left:93px;top:71px">新規</div>
<div class="t m" style="left:153px;top:62px">編集単位使用</div>
<div class="t m" style="left:153px;top:72px">背景色は選択しない</div>
<div class="t m" style="left:247px;top:62px">背景色抜き</div>
<div class="t m" style="left:247px;top:72px;letter-spacing:-.6px">ドラッグ開始点中心</div>
<div class="t m" style="left:341px;top:62px">横幅 = 縦幅</div>
<div class="t m" style="left:11px;top:87px">編集ﾚｲﾔ</div>
<div class="t m" style="left:49px;top:87px;font-size:7.500px">noname005</div>
<div class="t m" style="left:191px;top:87px">表示制限</div>
<div class="t m" style="left:231px;top:87px">無し</div>
<div class="t m" style="left:364px;top:87px">表示</div>

<div class="t" style="left:2px;top:681px;font-size:8.600px;line-height:11px">座標(280,137)→(287,159)</div>
<div class="t" style="left:107px;top:681px;font-size:8.600px;line-height:11px">(8 x 23)</div>
<div class="t" style="left:1165px;top:681px;font-size:8.500px;line-height:11px">317,188</div>
<div class="t" style="left:1210px;top:681px;font-size:8.600px;line-height:11px">427 x 240 x 6</div>

<div class="t" style="left:1142px;top:172px;font-size:8.500px;line-height:14px">レイヤ管理</div>
<div class="t m" style="left:1067px;top:189px;color:#666">ﾌｧｲﾙ(F)</div>
<div class="t m" style="left:1104px;top:189px;color:#666">ﾚｲﾔ(L)</div>
<div class="t m" style="left:1137px;top:189px;color:#666">設定(T)</div>
<div class="t" style="left:1125px;top:229px;font-size:9.500px;color:#e0e0f0">noname005</div>
<div class="t" style="left:1125px;top:261px;font-size:9.500px">noname004</div>
<div class="t" style="left:1125px;top:293px;font-size:9.500px">noname003</div>
<div class="t" style="left:1125px;top:324px;font-size:10.500px;line-height:14px">敵その他</div>
<div style="position:absolute;left:1124px;top:352px;width:100px;height:9px;overflow:hidden"><div class="t" style="left:0;top:2px;font-size:11px;line-height:14px">空室</div></div>

<div class="t" style="left:1070px;top:388px;font-size:7.500px;line-height:14px">カラーパレット</div>
<div class="t m" style="left:1049px;top:405px;color:#666">ﾌｧｲﾙ(F)</div>
<div class="t m" style="left:1086px;top:405px;color:#666">編集(E)</div>
<div class="t m" style="left:1122px;top:405px;color:#666">ﾊﾟﾚｯﾄ(C)</div>
<div class="t m" style="left:1047px;top:555px;font-size:9.500px">赤</div>
<div class="t m" style="left:1047px;top:567px;font-size:9.500px">緑</div>
<div class="t m" style="left:1047px;top:579px;font-size:9.500px">青</div>
<div class="t m" style="left:1061px;top:556px;font-size:8px">255</div>
<div class="t m" style="left:1061px;top:568px;font-size:8px">255</div>
<div class="t m" style="left:1061px;top:580px;font-size:8px">255</div>
<div class="t m" style="left:1169px;top:580px;font-size:8px">0</div>
<div class="t m" style="left:1184px;top:580px;font-size:8px">48</div>

<div class="t" style="left:1198px;top:700px;font-size:12px;color:#e8f0f6">あ</div>
<div class="t" style="left:1231px;top:696px;font-size:10px;color:#eef5fa">1:05</div>
<div class="t" style="left:1218px;top:707px;font-size:10px;color:#eef5fa">2013/11/12</div>
</body></html>
